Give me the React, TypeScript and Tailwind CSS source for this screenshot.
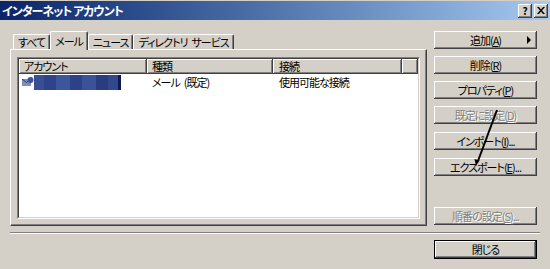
import type { ReactNode } from "react";

const FONT = "font-['Noto_Sans_CJK_JP','Liberation_Sans',sans-serif] [font-feature-settings:'palt']";
const TXT = "text-[11px] leading-none tracking-[-1px] whitespace-nowrap";

// classic raised 3D edge
const RAISED =
    "shadow-[inset_-1px_-1px_#404040,inset_1px_1px_#ffffff,inset_-2px_-2px_#808080,inset_2px_2px_#d4d0c8]";

function Btn({
    children,
    disabled,
    className = "",
    arrow,
}: {
    children: ReactNode;
    disabled?: boolean;
    className?: string;
    arrow?: boolean;
}) {
    return (
        <div
            className={`relative flex h-[18px] w-[103px] shrink-0 items-center justify-center bg-[#d4d0c8] ${TXT} ${RAISED} ${
                disabled ? "text-[#808080] [text-shadow:1px_1px_0_#ffffff]" : "text-black"
            } ${className}`}
        >
            <span>{children}</span>
            {arrow && (
                <span className="absolute right-[6px] top-[5px] h-0 w-0 border-y-[4px] border-l-[4px] border-y-transparent border-l-black" />
            )}
        </div>
    );
}

function Tab({ label, active }: { label: ReactNode; active?: boolean }) {
    return (
        <div
            className={`flex items-start rounded-t-[2px] border-l border-t border-white bg-[#d4d0c8] px-[4px] ${TXT} shadow-[inset_-1px_0_#808080] border-r border-r-[#404040] ${
                active ? "relative z-10 -mb-px h-[19px] pt-[4px]" : "h-[15px] pt-[2px]"
            }`}
        >
            {label}
        </div>
    );
}

function HeaderCell({ label, width, pad = "pl-[5px]" }: { label: string; width: string; pad?: string }) {
    return (
        <div className={`flex h-[15px] shrink-0 items-center ${width} ${pad} bg-[#d4d0c8] ${TXT} ${RAISED}`}>
            {label}
        </div>
    );
}

export default function App() {
    return (
        <div className={`relative flex h-[269px] w-[550px] flex-col overflow-hidden bg-[#d4d0c8] pt-px text-black ${FONT}`}>
            {/* Title bar */}
            <div className="flex h-[19px] shrink-0 items-center bg-gradient-to-r from-[#0a246a] to-[#a6caf0] pl-[2px] pr-[2px]">
                <span className="whitespace-nowrap text-[12px] font-bold leading-none tracking-[-1px] text-white">
                    インターネット アカウント
                </span>
                <div className="ml-auto flex gap-[2px]">
                    <div className={`flex h-[14px] w-[14px] items-center justify-center bg-[#d4d0c8] text-[10px] font-bold leading-none ${RAISED}`}>
                        ?
                    </div>
                    <div className={`flex h-[14px] w-[14px] items-center justify-center bg-[#d4d0c8] ${RAISED}`}>
                        <svg width="8" height="7" viewBox="0 0 8 7">
                            <path d="M0 0h2l2 2.5L6 0h2L5 3.5 8 7H6L4 4.5 2 7H0l3-3.5z" fill="#000" />
                        </svg>
                    </div>
                </div>
            </div>

            {/* Body */}
            <div className="flex h-[212px] shrink-0">
                <div className="ml-[10px] flex w-[417px] flex-col pt-[11px]">
                    {/* Tab strip */}
                    <div className="flex h-[18px] items-end pl-[3px]">
                        <Tab label="すべて" />
                        <Tab label="メール" active />
                        <Tab label="ニュース" />
                        <Tab
                            label={
                                <>
                                    ディレクトリ<span className="ml-[4px]">サービス</span>
                                </>
                            }
                        />
                    </div>

                    {/* Tab panel */}
                    <div className="flex h-[177px] flex-col border-l border-t border-white border-b border-r border-b-[#404040] border-r-[#404040] pb-[6px] pl-[6px] pr-[6px] pt-[7px] shadow-[inset_-1px_-1px_#808080]">
                        <div className="flex flex-1 flex-col border-l border-t border-[#808080] border-b-white border-r-white border-b border-r">
                            <div className="flex flex-1 flex-col overflow-hidden border-l border-t border-[#404040] border-b border-r border-b-[#d4d0c8] border-r-[#d4d0c8] bg-white">
                                <div className="flex">
                                    <HeaderCell label="アカウント" width="w-[128px]" />
                                    <HeaderCell label="種類" width="w-[126px]" />
                                    <HeaderCell label="接続" width="w-[129px]" pad="pl-[6px]" />
                                    <HeaderCell label="" width="flex-1" />
                                </div>
                                <div className={`flex h-[16px] items-center ${TXT}`}>
                                    <div className="flex w-[128px] items-center pl-[3px]">
                                        <svg width="12" height="12" viewBox="0 0 12 12" className="shrink-0">
                                            <rect x="0" y="3" width="9" height="7" fill="#7d8fb8" />
                                            <path d="M0 3l4.5 3.5L9 3" stroke="#2b3c78" fill="none" />
                                            <circle cx="8.5" cy="4" r="3" fill="#3d5196" />
                                        </svg>
                                        <div className="flex h-[15px]">
                                            <div className="w-[10px] bg-[#3a4f93]" />
                                            <div className="w-[12px] bg-[#2e4389]" />
                                            <div className="w-[14px] bg-[#3c559c]" />
                                            <div className="w-[12px] bg-[#2d418a]" />
                                            <div className="w-[14px] bg-[#3a5297]" />
                                            <div className="w-[12px] bg-[#2a3c80]" />
                                            <div className="w-[10px] bg-[#33478d]" />
                                            <div className="w-[3px] bg-[#0f1a55]" />
                                        </div>
                                    </div>
                                    <div className="w-[126px] pl-[5px]">
                                        メール<span className="ml-[4px]">(既定)</span>
                                    </div>
                                    <div className="pl-[6px]">使用可能な接続</div>
                                </div>
                            </div>
                        </div>
                    </div>
                </div>

                {/* Right buttons */}
                <div className="ml-[7px] flex flex-col pt-[11px]">
                    <Btn arrow>
                        追加(<u>A</u>)
                    </Btn>
                    <Btn className="mt-[7px]">
                        削除(<u>R</u>)
                    </Btn>
                    <Btn className="mt-[7px]">
                        プロパティ(<u>P</u>)
                    </Btn>
                    <Btn className="mt-[7px]" disabled>
                        既定に設定(<u>D</u>)
                    </Btn>
                    <Btn className="mt-[8px]">
                        インポート(<u>I</u>)...
                    </Btn>
                    <Btn className="mt-[8px]">
                        エクスポート(<u>E</u>)...
                    </Btn>
                    <Btn className="mt-[31px]" disabled>
                        順番の設定(<u>S</u>)...
                    </Btn>
                </div>
            </div>

            {/* Separator */}
            <div className="mx-[10px] h-[2px] shrink-0 border-b border-t border-b-white border-t-[#808080]" />

            {/* Close */}
            <div className="mr-[13px] mt-[6px] flex justify-end">
                <div className="border border-black">
                    <div className={`flex h-[17px] w-[101px] items-center justify-center bg-[#d4d0c8] ${TXT} ${RAISED}`}>
                        閉じる
                    </div>
                </div>
            </div>

            {/* Annotation arrow drawn over the dialog */}
            <svg className="pointer-events-none absolute inset-0" width="550" height="269" viewBox="0 0 550 269">
                <line x1="497" y1="110" x2="478" y2="161" stroke="#000" strokeWidth="2" />
                <path d="M476 166l-1.5-7 5 1.5z" fill="#000" />
            </svg>
        </div>
    );
}
